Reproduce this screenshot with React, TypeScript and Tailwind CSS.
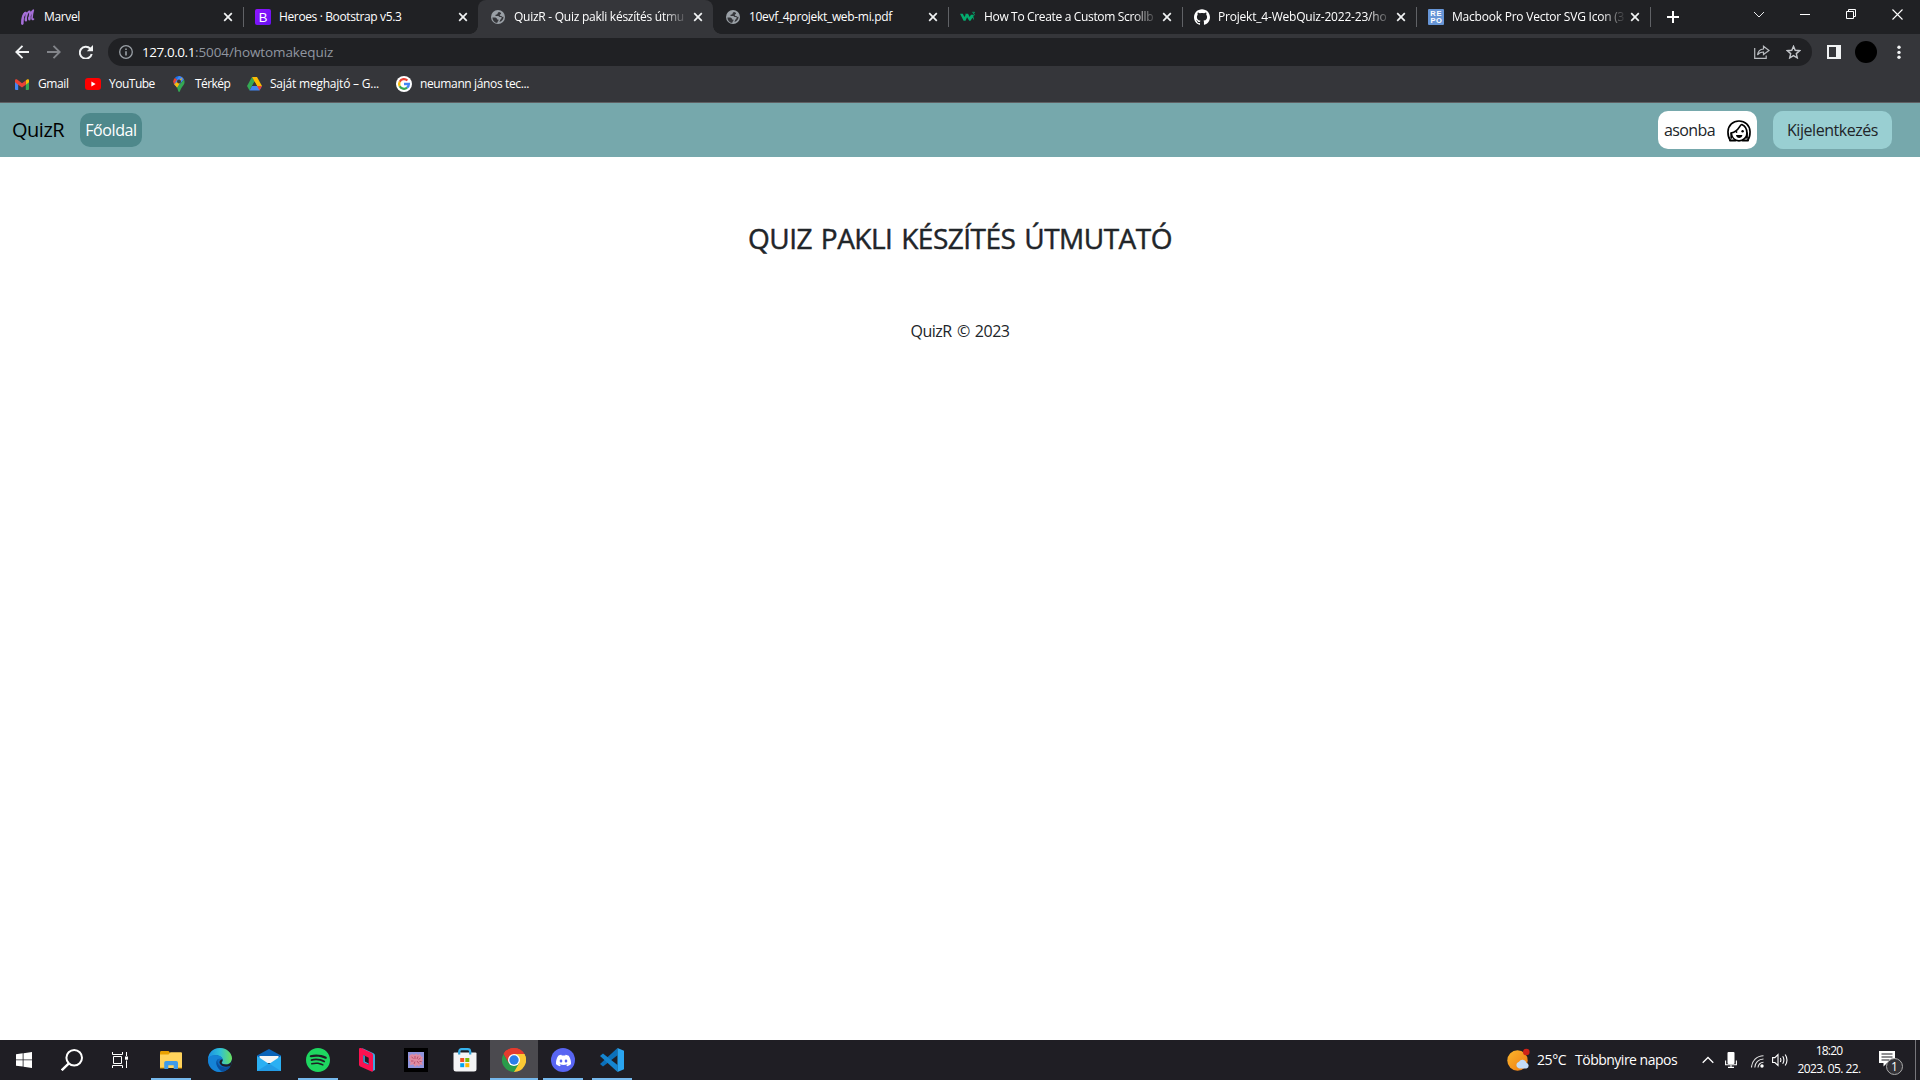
import type { ReactNode } from "react";
import { SiGithub, SiSpotify, SiDiscord } from "react-icons/si";

/* ---------- Browser icons ---------- */

function Globe() {
  return (
    <svg width="16" height="16" viewBox="0 0 16 16">
      <circle cx="8" cy="8" r="7" fill="#9aa0a6" />
      <path d="M9.200 3c-1.200.3-1.800.9-1.600 1.700-.3.800-1.600.5-2.100 1.200-.3.500.1 1 .9 1h1.800c.9 0 1 .9 1.700 1.200h1.600c.3 1.200-.2 2-1 2.500-.6.600-.5 1.500-1.100 2.400 2.600-.7 4.200-2.700 4.200-5.200-.8.300-1.600 0-1.900-.6-.6-.4-1.600-.2-1.800-.8-.3-.7.300-1.100 1-1.300.5-.5.200-1.800-1.700-2.100z" fill="#35363a" />
      <path d="M2.400 8.400h2.800c1.200.1 1.900.9 1.900 2h1.300v1.700c-1 .4-1.100 1.300-1.100 1.900-2.900-.3-4.900-2.600-4.900-5.600z" fill="#35363a" />
    </svg>
  );
}
function Marvel() {
  return (
    <svg width="16" height="16" viewBox="0 0 16 16" fill="none" stroke="#a66fd9" strokeWidth="1.700" strokeLinecap="round" strokeLinejoin="round">
      <path d="M2.400 14.800C2.300 10.500 3.300 5.200 5.600 3.600c1.200-.4.400 4.400.2 7.400C6.200 7.300 7.400 3.500 9.300 2.300c1.300-.4.200 4.700.1 7.700C9.900 6.300 11.100 2.500 13.300 1.100c-.8 3-1.500 6-1.200 8.500.1.900.7 1 1.300.5" />
      <path d="M2.300 14.500C2.300 10.500 3.400 5.600 5.100 4M5.900 11.300l-.1-1.500M9.400 10.200V8.800" strokeWidth="2.400" />
    </svg>
  );
}
function Bootstrap() {
  return (
    <span className="flex h-4 w-4 items-center justify-center rounded-[2px] bg-gradient-to-br from-[#9013fe] to-[#6610f2] font-['Liberation_Sans'] text-[13px] leading-none text-white">B</span>
  );
}
function W3() {
  return (
    <svg width="17" height="16" viewBox="0 0 17 16" fill="#04aa6d">
      <path d="M0 4.500h3l1.700 3.600 1.300-2.600-.5-1h3.100l1.700 3.500 1.300-2.400h2.200l1.200 5.800-1.800-2.600-2 3.200H9.800L7.500 8.200 5.900 12H3.800z" />
      <path d="M13 3h2.500l-1.300 1.700c1.700-.1 1.700 2.300-1 1.900" fill="none" stroke="#04aa6d" strokeWidth=".9" />
    </svg>
  );
}
function Repo() {
  return (
    <span className="grid h-4 w-4 grid-cols-2 content-center justify-items-center gap-y-px rounded-[1px] bg-[#6695d6] px-[2px] font-['Liberation_Sans'] text-[7.500px] leading-[6px] font-bold text-white">
      <i className="not-italic">R</i><i className="not-italic">E</i><i className="not-italic">P</i><i className="not-italic">O</i>
    </span>
  );
}
function CloseX() {
  return (
    <svg className="ml-auto shrink-0" width="10" height="10" viewBox="0 0 10 10" stroke="#f1f3f4" strokeWidth="1.700">
      <path d="M1.200 1.200l7.600 7.600M8.800 1.200L1.200 8.800" />
    </svg>
  );
}

function Tab({ icon, title, tracking, width = "w-[235px]", active = false, divider = true, fade = false }: { icon: ReactNode; title: string; tracking: string; width?: string; active?: boolean; divider?: boolean; fade?: boolean }) {
  return (
    <div className={`relative flex h-[34px] shrink-0 items-center pr-[10px] pl-[12px] ${width} ${active ? "rounded-t-lg bg-[#35363a]" : ""}`}>
      {active && (
        <>
          <span className="absolute bottom-0 -left-2 h-2 w-2 bg-[radial-gradient(circle_at_0_0,#202124_7.500px,#35363a_8px)]" />
          <span className="absolute -right-2 bottom-0 h-2 w-2 bg-[radial-gradient(circle_at_100%_0,#202124_7.500px,#35363a_8px)]" />
        </>
      )}
      <span className="flex w-4 shrink-0 justify-center">{icon}</span>
      <span className={`ml-2 w-[174px] text-[12px] whitespace-nowrap text-white ${tracking} ${fade ? "[mask-image:linear-gradient(to_right,#000_86%,transparent)]" : ""}`}>{title}</span>
      <CloseX />
      {divider && <span className="absolute top-[7px] -right-px h-5 w-px bg-[#606266]" />}
    </div>
  );
}

function TabStrip() {
  return (
    <div className="flex h-[34px] bg-[#202124] pl-2">
      <Tab icon={<Marvel />} title="Marvel" tracking="tracking-[-0.35px]" />
      <Tab icon={<Bootstrap />} title="Heroes · Bootstrap v5.3" tracking="tracking-[-0.37px]" divider={false} />
      <Tab icon={<Globe />} title="QuizR - Quiz pakli készítés útmu" tracking="tracking-[-0.26px]" active divider={false} fade />
      <Tab icon={<Globe />} title="10evf_4projekt_web-mi.pdf" tracking="tracking-[-0.32px]" />
      <Tab width="w-[234px]" icon={<W3 />} title="How To Create a Custom Scrollb" tracking="tracking-[-0.34px]" fade />
      <Tab width="w-[234px]" icon={<SiGithub size={16} color="#fff" />} title="Projekt_4-WebQuiz-2022-23/ho" tracking="tracking-[-0.2px]" fade />
      <Tab width="w-[234px]" icon={<Repo />} title="Macbook Pro Vector SVG Icon (3" tracking="tracking-[-0.22px]" fade />
      <svg className="mt-[10px] ml-4" width="14" height="14" viewBox="0 0 14 14" stroke="#fff" strokeWidth="2"><path d="M7 1v12M1 7h12" /></svg>
      <div className="mt-[9px] mr-[17px] ml-auto flex h-[11px] items-center gap-9 text-[#e8eaed]">
        <svg width="10" height="11" viewBox="0 0 10 11" fill="none" stroke="currentColor"><path d="M0 3l5 5 5-5" /></svg>
        <svg width="10" height="11" viewBox="0 0 10 11" stroke="#fff"><path d="M0 5.500h10" /></svg>
        <svg width="10" height="11" viewBox="0 0 10 11" fill="none" stroke="#fff"><path d="M.5 2.500h7v7h-7zM2.500 2.500v-2h7v7h-2" /></svg>
        <svg width="11" height="11" viewBox="0 0 11 11" stroke="#fff" strokeWidth="1.100"><path d="M.5.500l10 10M10.500.500l-10 10" /></svg>
      </div>
    </div>
  );
}

function Toolbar() {
  return (
    <div className="flex h-9 items-center bg-[#35363a] pl-[15px]">
      <svg width="14" height="14" viewBox="0 0 14 14" fill="none" stroke="#f1f3f4" strokeWidth="1.900"><path d="M14 7H1.500M7.500 .8L1.300 7l6.200 6.200" /></svg>
      <svg className="ml-[18px]" width="14" height="14" viewBox="0 0 14 14" fill="none" stroke="#83858a" strokeWidth="1.900"><path d="M0 7h12.500M6.500 .8L12.700 7l-6.200 6.200" /></svg>
      <svg className="ml-[18px]" width="14" height="14" viewBox="0 0 14 14"><path d="M11.300 3.600A6 6 0 1 0 12.700 9" fill="none" stroke="#f1f3f4" strokeWidth="2" /><path d="M14 0v6.200H7.800z" fill="#f1f3f4" /></svg>
      <div className="ml-[15px] flex h-7 w-[1704px] items-center rounded-full bg-[#202124] pr-[11px] pl-[11px]">
        <svg width="14" height="14" viewBox="0 0 14 14" fill="none" stroke="#9aa0a6" strokeWidth="1.300"><circle cx="7" cy="7" r="6.300" /><path d="M7 6.200v4.300M7 3.400v1.500" strokeWidth="1.600" /></svg>
        <span className="ml-[9px] text-[13.500px] tracking-[-0.44px] whitespace-nowrap text-white">127.0.0.1</span>
        <span className="text-[13.500px] tracking-[-0.1px] whitespace-nowrap text-[#9096a0]">:5004/howtomakequiz</span>
        <svg className="ml-auto" width="16" height="14" viewBox="0 0 16 14" fill="none" stroke="#b9bcc0" strokeWidth="1.200"><path d="M.7 3v10.300h11.500V10.500M3.500 10c.5-3.800 2.500-5.800 6-6V1.300L15 5.500 9.500 9.500V7C7 7 5 7.700 3.500 10z" /></svg>
        <svg className="mr-0 ml-[16px]" width="15" height="14" viewBox="0 0 15 14" fill="none" stroke="#c3c6ca" strokeWidth="1.400"><path d="M7.500 1.300l1.700 4 4.400.4-3.300 2.900 1 4.300-3.800-2.300-3.800 2.300 1-4.300L1.400 5.700l4.400-.4z" /></svg>
      </div>
      <svg className="ml-[15px]" width="14" height="14" viewBox="0 0 14 14"><path fillRule="evenodd" d="M0 0h14v14H0zM2 2v10h7V2z" fill="#f1f3f4" /></svg>
      <span className="ml-[14px] h-[22px] w-[22px] rounded-full bg-black" />
      <svg className="ml-[20px]" width="4" height="14" viewBox="0 0 4 14" fill="#f1f3f4"><circle cx="2" cy="2.200" r="1.700" /><circle cx="2" cy="7.400" r="1.700" /><circle cx="2" cy="12.300" r="1.700" /></svg>
    </div>
  );
}

function Bookmark({ icon, className, children }: { icon: ReactNode; className: string; children: ReactNode }) {
  return (
    <div className={`flex shrink-0 items-center text-[12px] whitespace-nowrap text-white ${className}`}>
      {icon}
      <span>{children}</span>
    </div>
  );
}

function Bookmarks() {
  return (
    <div className="flex h-[33px] items-center border-b border-[#5f6063] bg-[#35363a] pb-[4px] pl-[15px]">
      <Bookmark className="w-[70px] gap-[9px] tracking-[-0.41px]" icon={
        <svg width="14" height="11" viewBox="0 0 14 11"><path d="M0 1.500V10q0 1 1 1h2.200V4.300z" fill="#4285f4" /><path d="M14 1.500V10q0 1-1 1h-2.200V4.300z" fill="#34a853" /><path d="M10.800 1.500L12 .6c1-.7 2 0 2 1v1.700l-3.200 2.500z" fill="#fbbc04" /><path d="M0 1.600C0 .4 1.200-.1 2.100.6L7 4.300 10.800 1.500v4.200L7 8.500 3.200 5.700 0 3.300z" fill="#ea4335" /></svg>
      }>Gmail</Bookmark>
      <Bookmark className="w-[88px] gap-2 tracking-[-0.5px]" icon={
        <svg width="16" height="12" viewBox="0 0 16 12"><rect width="16" height="12" rx="3" fill="#f00" /><path d="M6.400 3.500v5L10.600 6z" fill="#fff" /></svg>
      }>YouTube</Bookmark>
      <Bookmark className="w-[74px] gap-[10px] tracking-[-0.55px]" icon={
        <svg width="12" height="16" viewBox="0 0 12 16"><path d="M6 0a5.500 5.500 0 0 0-4.200 1.900L6 6z" fill="#1a73e8" /><path d="M1.800 1.900A5.500 5.500 0 0 0 1.600 9L6 5z" fill="#ea4335" /><path d="M6 0c2 0 4 1.200 5 3.500L4 11.500 1.300 8.300z" fill="#4285f4" /><path d="M1.300 8.300L9.500 1.500 4.300 12C3.500 10.500 2 9.500 1.300 8.300z" fill="#fbbc04" /><path d="M11 3.500c1.200 2.700.3 4.700-1.400 6.700C7.500 12.500 7.200 16 6 16c-1 0-1-2.500-2-4.500z" fill="#34a853" /><circle cx="6" cy="5.500" r="2" fill="#35363a" /></svg>
      }>Térkép</Bookmark>
      <Bookmark className="w-[149px] gap-[8px] tracking-[-0.22px]" icon={
        <svg width="15" height="14" viewBox="0 0 15 14"><path d="M5 0L0 9l2.500 4.500L7.500 4.500z" fill="#34a853" /><path d="M5 0h5l5 9h-5z" fill="#fbbc04" /><path d="M5.100 9H15l-2.500 4.500h-10z" fill="#4285f4" /><path d="M10 9h5l-2.500 4.500z" fill="#ea4335" /><path d="M7.500 4.800L10 9H5.100z" fill="#35363a" /></svg>
      }>Saját meghajtó – G...</Bookmark>
      <Bookmark className="gap-2 tracking-[-0.37px]" icon={
        <svg width="16" height="16" viewBox="0 0 16 16" fill="none" strokeWidth="2.300"><circle cx="8" cy="8" r="8" fill="#fff" /><path d="M11.400 4.500A4.900 4.900 0 0 0 3.700 5.700" stroke="#ea4335" /><path d="M3.700 5.700a4.900 4.900 0 0 0 0 4.600" stroke="#fbbc04" /><path d="M3.700 10.300a4.900 4.900 0 0 0 7.400 1.400" stroke="#34a853" /><path d="M11.100 11.700A4.800 4.800 0 0 0 12.900 8H8" stroke="#4285f4" /></svg>
      }>neumann jános tec...</Bookmark>
    </div>
  );
}

/* ---------- Page ---------- */

function Avatar() {
  return (
    <svg width="24" height="22" viewBox="0 0 24 22" fill="none" stroke="#000" strokeWidth="1.700" strokeLinecap="round" strokeLinejoin="round">
      <path d="M3.200 20C1.500 18 .9 14.500 1 11.500 1.200 5.300 6 1 12 1s10.800 4.300 11 10.500c.1 3-.5 6.500-2.200 8.500" />
      <path d="M3 20.600h5.500M15.500 20.600H21" strokeWidth="2" />
      <path d="M14.800 4.500c-2.700.6-2.300 6.500-10.600 8.500C4.800 17.700 8 20.800 12 20.800s8-3 8-7.600c0-3.600-1.700-7.200-5.200-8.700z" />
      <path d="M4.200 13v5M20 13v5" strokeWidth="1.700" />
      <path d="M9 15h6.400c-.3 4-6.100 4-6.400 0z" fill="#000" stroke="none" />
      <circle cx="9.500" cy="12" r=".9" fill="#000" stroke="none" />
      <circle cx="15.600" cy="11.300" r="1.200" fill="#000" stroke="none" />
    </svg>
  );
}

function Page() {
  return (
    <main className="flex flex-1 flex-col bg-white text-[#212529]">
      <nav className="flex h-[54px] items-center bg-[#76a8ac] pr-7 pl-3 whitespace-nowrap">
        <span className="w-[68px] text-[20px] tracking-[-0.48px] text-black">QuizR</span>
        <span className="flex h-[34px] w-[62px] items-center justify-center rounded-[10px] bg-[#4e888b] text-[16px] tracking-[-0.4px] text-white">Főoldal</span>
        <span className="ml-auto flex h-[38px] w-[99px] items-center justify-between rounded-[10px] bg-white px-[6px] text-[16px] tracking-[-0.6px]">
          <span className="pb-px">asonba</span>
          <span className="mt-[2px]"><Avatar /></span>
        </span>
        <span className="ml-4 flex h-[38px] w-[119px] items-center justify-center rounded-[10px] bg-[#99cfd2] pb-px text-[16px] tracking-[-0.46px]">Kijelentkezés</span>
      </nav>
      <h1 className="mt-[64px] text-center text-[28px] leading-[34px] tracking-[-0.5px] [word-spacing:2px] [-webkit-text-stroke:0.45px_#212529]">QUIZ PAKLI KÉSZÍTÉS ÚTMUTATÓ</h1>
      <p className="mt-[64px] text-center text-[16px] leading-6 tracking-[-0.5px] [word-spacing:1.500px]">QuizR © 2023</p>
    </main>
  );
}

/* ---------- Taskbar ---------- */

function TaskButton({ className, children, running = false, active = false }: { className: string; children: ReactNode; running?: boolean; active?: boolean }) {
  return (
    <div className={`relative flex h-10 shrink-0 items-center justify-center ${className} ${active ? "bg-[#4b4a4f]" : ""}`}>
      {children}
      {running && <span className={`absolute bottom-0 h-[2px] bg-[#76b9ed] ${active ? "w-12" : "w-10"}`} />}
    </div>
  );
}

function Taskbar() {
  return (
    <footer className="flex h-10 items-center bg-[#1f1e24] text-white">
      <TaskButton className="w-12">
        <svg width="16" height="16" viewBox="0 0 16 16" fill="#fff"><path d="M0 2.200l6.700-.9v6.200H0zM7.500 1.200L16 0v7.500H7.500zM0 8.300h6.700v6.300L0 13.700zM7.500 8.300H16V16l-8.500-1.200z" /></svg>
      </TaskButton>
      <TaskButton className="w-12">
        <svg width="22" height="22" viewBox="0 0 22 22" fill="none" stroke="#fff" strokeWidth="2"><circle cx="13.200" cy="8.800" r="7.800" /><path d="M7.600 14.600L.7 21.300" strokeWidth="2.400" /></svg>
      </TaskButton>
      <TaskButton className="w-[47px]">
        <svg width="16" height="16" viewBox="0 0 16 16" fill="none" stroke="#fff"><path d="M.5 0v2.500h10V0M.5 16v-2.500h10V16M1.500 4.500h8v7h-8zM14.500 0v4M14.500 8.500V16" /><path d="M13 4.500h3v3.200h-3z" fill="#fff" stroke="none" /></svg>
      </TaskButton>
      <TaskButton className="ml-1 w-12" running>
        <svg width="22" height="18" viewBox="0 0 22 18"><path d="M0 1.500Q0 0 1 0h7.500L10 1.500v4H0z" fill="#e8a000" /><path d="M0 3.500h8.500L10.500 1.200H21q1 0 1 1V17H0z" fill="#ffd35c" /><path d="M4.200 18v-6.200q0-1.800 1.800-1.800h10.200Q18 10 18 11.800V18h-4.300v-3.700H8.300V18z" fill="#3e9bea" /><path d="M0 17h4.200M18 17h4" stroke="#e8a000" /></svg>
      </TaskButton>
      <TaskButton className="w-[49px]">
        <svg width="24" height="24" viewBox="0 0 24 24"><defs><linearGradient id="edgeTop" x1="0" y1=".4" x2="1" y2=".4"><stop stopColor="#1a8fe3" /><stop offset=".5" stopColor="#2fc0d8" /><stop offset="1" stopColor="#6ce05a" /></linearGradient></defs><circle cx="12" cy="12" r="12" fill="#0c6ac0" /><path d="M0 11C.5 4.500 5.500 0 12 0s12 5 12 10.500c0 4-3 5.800-6 5.800-2.700 0-4.400-.8-4.300-1.600 0-.7 1-1 1-3 0-2.300-2.700-4.500-6.500-4.500C4.500 7.200 1 8.500 0 11z" fill="url(#edgeTop)" /><path d="M0 12C.5 8 4 7 8 7.200c4 .2 6.500 2 6.700 4.500-1-1.500-3-1.700-4.500-.7C7 13.500 8 20 15 23.500 7 25.500 0 20 0 12z" fill="#1583d6" /><path d="M10.200 11C6.500 13.500 8.500 20 14 23.700c4-.6 7-2.700 8.500-5.500-6 2.500-11 1-12.800-3.200-.7-1.800-.2-3.200.5-4z" fill="#0a4f9e" /><path d="M13.700 14.800c0 1 2 1.800 4.300 1.700 3 0 5.500-1.700 6-5.500v3l-1.500 4c-5 1.500-9 .5-10.500-2.200-1.300-2.300.5-4.300 2.500-4.600.6 1.900-.8 2.500-.8 3.600z" fill="#1f1e24" /></svg>
      </TaskButton>
      <TaskButton className="w-[49px]">
        <svg width="24" height="22" viewBox="0 0 24 22"><path d="M12 0l12 6.500V11H0V6.500z" fill="#0a63b8" /><path d="M2.500 7h19v7h-19z" fill="#f5f5f5" /><path d="M0 7l12 8 12-8v15H0z" fill="#2bb0f3" /><path d="M12 14.500L24 22H0z" fill="#1e90de" opacity=".6" /></svg>
      </TaskButton>
      <TaskButton className="w-[49px]" running><SiSpotify size={24} color="#1ed760" /></TaskButton>
      <TaskButton className="w-[49px]">
        <svg width="16" height="24" viewBox="0 0 16 24"><path d="M3 0l11.500 5.200q1.500.8 1.500 2.300V22l-3 1.500z" fill="#3aa8e0" /><path d="M.5 0h1.700l10.500 5q1.300.8 1.300 2V23l-1 .8L1.200 18.500Q0 17.800 0 16.500V.5z" fill="#fa1150" /><path d="M4.300 7l5.400 2.700V16.800L4.300 14.200z" fill="#1f1e24" /><path d="M4.300 7l1.500.7v5.800l3.900 2.100v1.200L4.300 14.200z" fill="#3aa8e0" /></svg>
      </TaskButton>
      <TaskButton className="w-[49px]">
        <svg width="24" height="24" viewBox="0 0 24 24" fill="none"><path d="M0 0h24v24H0z" fill="#000" /><path d="M4 4h16v16H4z" fill="#9094dc" /><path d="M6 7l2.500-1 1.500 1 2-1.500L14 7l2-1 1 2.500 2 .5-1 2 1 2-1.500 1 1.500 3-3-.5-1 2-2-1.500-2 2-1.500-2.500L6 17l.5-3-1.500-1.500L6 11 5 9z" fill="#e08aa0" /><path d="M7.500 9l2 1.500M11 8v3M14 8.500L13 11M16.500 10l-2 1.500M7 13h2.500M11 13.500l-1 2.500M13 13l2 2.500M15.500 13.500h2" stroke="#b8506e" /></svg>
      </TaskButton>
      <TaskButton className="w-[50px]">
        <svg width="24" height="24" viewBox="0 0 24 24"><path d="M6.300 7V3.500q0-2.300 2.300-2.300h6.200q2.300 0 2.300 2.300V7" fill="none" stroke="#36b3ee" strokeWidth="2.200" /><path d="M1.500 4.500h21q1 0 1 1V21q0 2.500-2.500 2.500H3Q.5 23.500.5 21V5.500q0-1 1-1z" fill="#f4f4f5" /><path d="M6.200 3.500v3M17.200 3.500v3" stroke="#2a9fd8" strokeWidth="2.200" /><path d="M7.200 10h4v4h-4z" fill="#f25022" /><path d="M12.300 10h4v4h-4z" fill="#7fba00" /><path d="M7.200 15.200h4v4h-4z" fill="#00a4ef" /><path d="M12.300 15.200h4v4h-4z" fill="#ffb900" /></svg>
      </TaskButton>
      <TaskButton className="w-12" running active>
        <svg width="24" height="24" viewBox="0 0 24 24"><path d="M12 12L1.600 6A12 12 0 0 1 22.400 6z" fill="#e33b2e" /><path d="M12 12L22.400 6A12 12 0 0 1 12 24z" fill="#fcc934" /><path d="M12 6h10.400a12 12 0 0 1 1 9L17 15z" fill="#fcc934" /><path d="M1.600 6A12 12 0 0 0 12 24l5.200-9H6.800z" fill="#2a9c4a" /><path d="M1.600 6l5.200 9 5-9H22.400A12 12 0 0 0 1.600 6z" fill="#e33b2e" /><circle cx="12" cy="12" r="6" fill="#fff" /><circle cx="12" cy="12" r="4.700" fill="#2b7de9" /></svg>
      </TaskButton>
      <TaskButton className="ml-px w-12" running>
        <span className="flex h-6 w-6 items-center justify-center rounded-full bg-[#5865f2]"><SiDiscord size={15} color="#fff" /></span>
      </TaskButton>
      <TaskButton className="ml-px w-12" running>
        <svg width="24" height="24" viewBox="0 0 24 24"><path d="M17.500 0v7.300L3 18.500 0 16z" fill="#0b70ba" /><path d="M0 8l3-2.500L17.500 17v7z" fill="#1585cf" /><path d="M17.500 0L24 2.800v18.400L17.500 24z" fill="#2aa5f0" /></svg>
      </TaskButton>

      <div className="ml-auto flex h-10 items-center whitespace-nowrap">
        <svg width="23" height="24" viewBox="0 0 23 24"><defs><linearGradient id="sun" x1="0" y1="0" x2="1" y2="1"><stop stopColor="#fbb62c" /><stop offset="1" stopColor="#ee7a13" /></linearGradient></defs><circle cx="10.500" cy="12.500" r="10.200" fill="url(#sun)" /><path d="M12 20.500a3.500 3.500 0 0 1 0-6.800 4 4 0 0 1 7.300 1 3 3 0 0 1 .2 5.800z" fill="#c3dcf8" /><circle cx="19.300" cy="4" r="3.300" fill="#cf2318" /></svg>
        <span className="ml-[7px] w-[38px] pb-px text-[14px] tracking-[-0.4px]">25°C</span>
        <span className="w-[127px] pb-px text-[14px] tracking-[-0.5px]">Többnyire napos</span>
        <svg width="12" height="8" viewBox="0 0 12 8" fill="none" stroke="#fff" strokeWidth="1.300"><path d="M.7 6.800L6 1.500l5.300 5.300" /></svg>
        <svg className="ml-[11px]" width="12" height="16" viewBox="0 0 12 16"><rect x="2.500" width="7" height="12" rx="1" fill="#fff" /><path d="M.6 8.500v4.300h10.800V8.500M6 13v2.400M3 15.400h6" fill="none" stroke="#fff" strokeWidth="1.100" /></svg>
        <svg className="mt-[2px] ml-[14px]" width="13" height="13" viewBox="0 0 13 13" fill="none" stroke="#e4e4e4" strokeWidth="1.100"><path d="M.5 12.500A12 12 0 0 1 12.500.700M3.800 12.500A8.700 8.700 0 0 1 12.500 4M7 12.500A5.500 5.500 0 0 1 12.500 7.200" /><circle cx="11" cy="11" r="1.700" fill="#fff" stroke="none" /></svg>
        <svg className="ml-[8px]" width="17" height="14" viewBox="0 0 17 14" fill="none" stroke="#fff" strokeWidth="1.100"><path d="M.6 4.600h2.300L6 1.500v11L2.900 9.500H.6zM8.300 5q1.200 2 0 4M10.700 3.300q2.400 3.700 0 7.400M13.200 1.500q3.600 5.500 0 11" /></svg>
        <div className="ml-[8px] flex w-[64px] flex-col items-center pb-px text-[12px] leading-[18px]">
          <span className="tracking-[-0.8px]">18:20</span>
          <span className="tracking-[-0.58px]">2023. 05. 22.</span>
        </div>
        <div className="relative ml-[18px] h-6 w-6">
          <svg className="mt-[3px]" width="17" height="17" viewBox="0 0 17 17"><path d="M0 0h16v12H8l-3.500 3.500V12H0z" fill="#fff" /><path d="M2.500 3h11M2.500 6h11M2.500 9h8" stroke="#1f1e24" strokeWidth="1.100" /></svg>
          <span className="absolute top-[10px] left-[7px] flex h-[17px] w-[17px] items-center justify-center rounded-full border border-[#aaa] bg-[#333237] text-[12px] leading-none">1</span>
        </div>
        <span className="mr-1 ml-[12px] h-10 w-px bg-[#77767b]" />
      </div>
    </footer>
  );
}

export default function App() {
  return (
    <div className="flex h-[1080px] w-[1920px] flex-col overflow-hidden bg-white font-['Open_Sans',sans-serif]">
      <TabStrip />
      <Toolbar />
      <Bookmarks />
      <Page />
      <Taskbar />
    </div>
  );
}
